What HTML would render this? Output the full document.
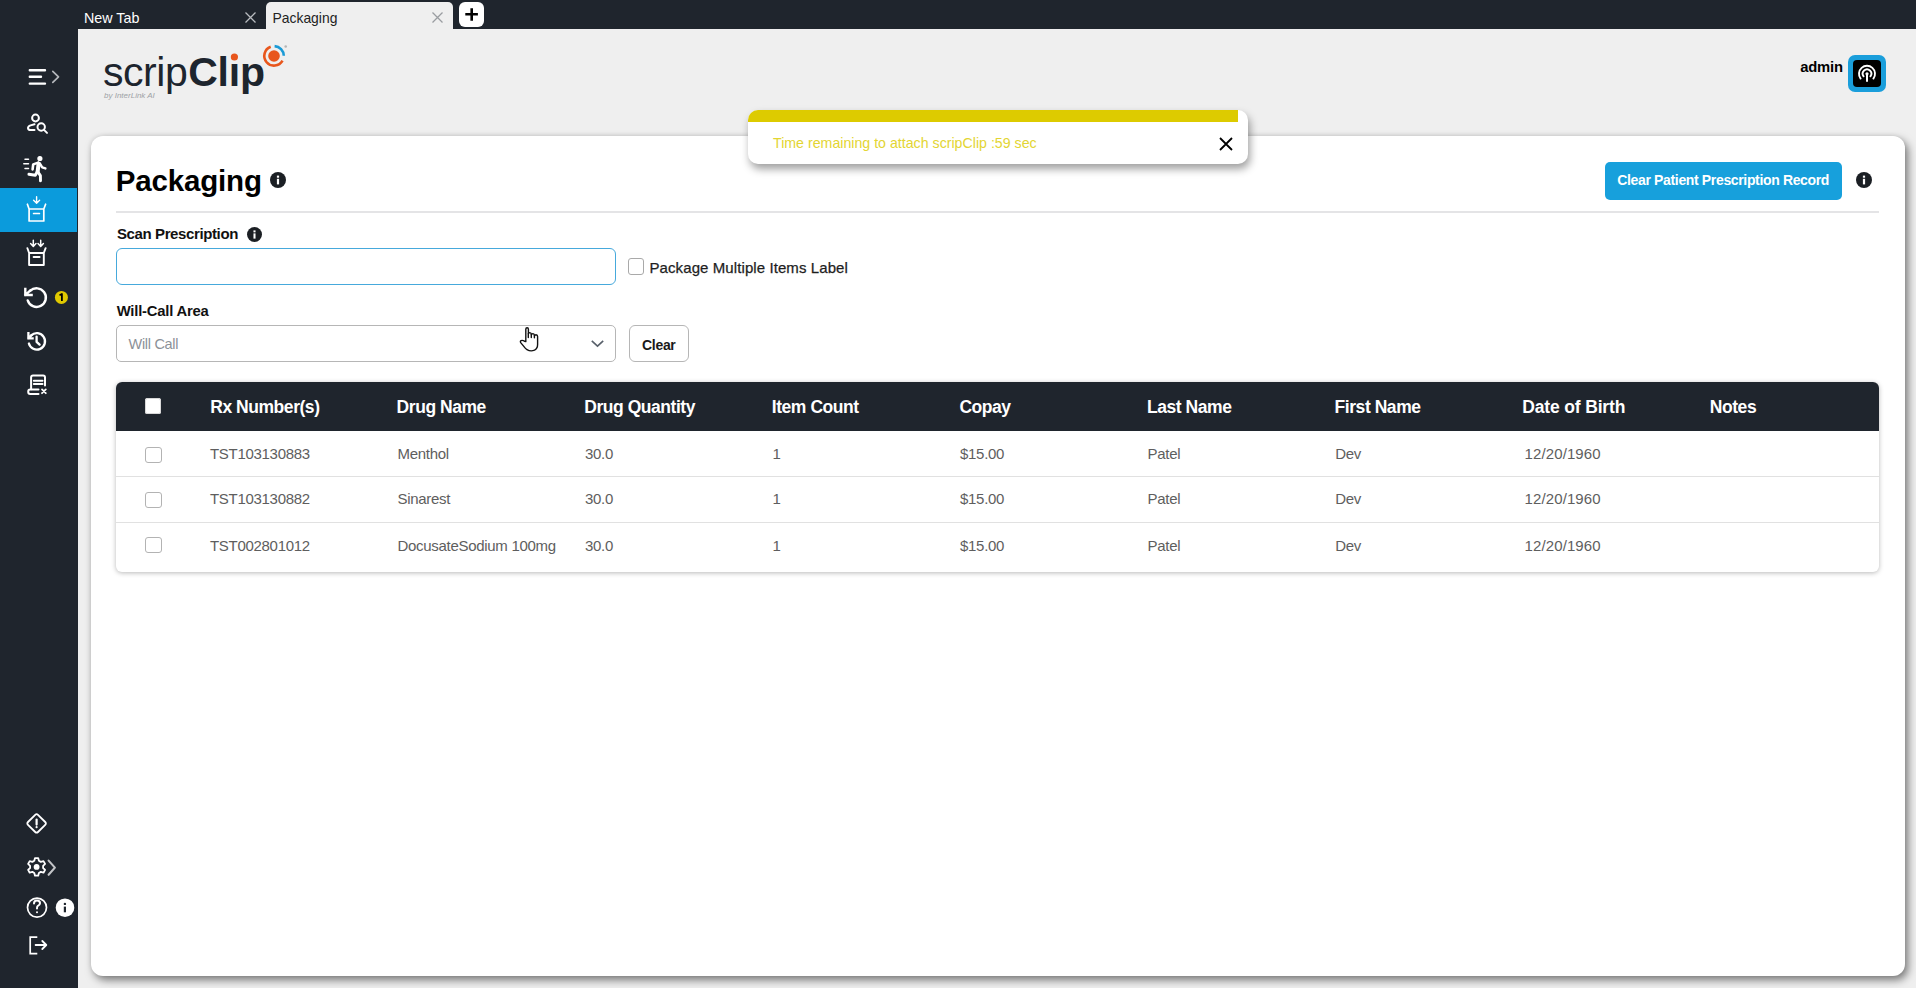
<!DOCTYPE html>
<html><head><meta charset="utf-8">
<style>
*{box-sizing:border-box;margin:0;padding:0}
html,body{width:1916px;height:988px;overflow:hidden;background:#efefef;font-family:"Liberation Sans",sans-serif;color:#000}
.abs{position:absolute}
#tabbar{left:0;top:0;width:1916px;height:29px;background:#1f252d}
#side{left:0;top:29px;width:78px;height:959px;background:#1f252d}
.t{position:absolute;white-space:nowrap;line-height:1}
#card{left:91px;top:136px;width:1814px;height:840px;background:#fff;border-radius:12px;box-shadow:3px 4px 8px rgba(0,0,0,.5),-1px -1px 4px rgba(0,0,0,.06)}
#hdr .h{top:398.5px;font-size:17.5px;font-weight:bold;letter-spacing:-.45px;color:#fff}
.row{position:absolute;left:0;width:1916px;height:20px}
.row .c{top:0;font-size:15px;letter-spacing:-.3px;color:#5e5e5e}
.cb{left:145px;width:16.5px;height:16px;border:1.5px solid #b3b3b3;border-radius:3px;background:#fff}
#toast{left:748px;top:110px;width:500px;height:54px;background:#fff;border-radius:10px;overflow:hidden;box-shadow:2px 5px 9px rgba(0,0,0,.38)}
</style></head>
<body>
<!-- TAB BAR -->
<div id="tabbar" class="abs">
  <div class="t" style="left:84px;top:11px;font-size:14.3px;color:#fff">New Tab</div>
  <svg class="abs" style="left:244px;top:11px" width="13" height="13" viewBox="0 0 13 13"><path d="M1.5 1.5L11.5 11.5M11.5 1.5L1.5 11.5" stroke="#b9bcc0" stroke-width="1.3"/></svg>
  <div class="abs" style="left:266px;top:2px;width:187px;height:27px;background:#efefef;border-radius:5px 5px 0 0"></div>
  <div class="t" style="left:272.5px;top:11.7px;font-size:13.9px;color:#222">Packaging</div>
  <svg class="abs" style="left:431px;top:11px" width="13" height="13" viewBox="0 0 13 13"><path d="M1.5 1.5L11.5 11.5M11.5 1.5L1.5 11.5" stroke="#9a9da1" stroke-width="1.3"/></svg>
  <div class="abs" style="left:459px;top:2px;width:25px;height:25px;background:#fff;border-radius:6px"></div>
  <svg class="abs" style="left:459px;top:2px" width="25" height="25" viewBox="0 0 25 25"><path d="M12.7 6.3V18.8M6.3 12.3H18.9" stroke="#000" stroke-width="2.6"/></svg>
</div>

<!-- SIDEBAR -->
<div id="side" class="abs"></div>
<div class="abs" style="left:0;top:188px;width:77px;height:44px;background:#0b9bdc"></div>
<svg class="abs" style="left:0;top:0" width="78" height="988" viewBox="0 0 78 988" fill="none" stroke="#fff" stroke-linecap="round" stroke-linejoin="round">
  <!-- hamburger -->
  <path d="M29.8 70.2H45M29.8 76.8H41M29.8 83.6H45" stroke-width="2.4"/>
  <path d="M52.8 71.3L58.5 76.8L52.8 82.3" stroke="#b4b7bb" stroke-width="1.7"/>
  <!-- user search -->
  <g stroke-width="2">
    <circle cx="35.5" cy="118" r="3.4"/>
    <path d="M34.5 124.3L30.6 125.4Q28 126.2 28 128Q28 130.1 30.6 130.1L34.5 130.1"/>
    <circle cx="41.2" cy="127" r="3.7"/>
    <path d="M44 129.9L47 132.9"/>
  </g>
  <!-- runner -->
  <g stroke-width="2">
    <circle cx="39.9" cy="158.5" r="1.9" fill="#fff" stroke-width="1.4"/>
    <path d="M25 159.3H28.5M23.8 163.7H28.5M25 168.5H28.5" stroke-width="1.5"/>
    <path d="M38.6 163.4L37.6 172" stroke-width="4"/>
    <path d="M38.2 162.6L33.2 164.4L32.6 169.4" stroke-width="2.6"/>
    <path d="M39.8 163.4L42.2 167.4L45.4 168.4" stroke-width="2.4"/>
    <path d="M37 172.2L35.3 175.3L28.9 174.3" stroke-width="2.9"/>
    <path d="M38 172.2L40.4 175.6L40.5 180.9" stroke-width="2.9"/>
  </g>
  <!-- box 1 (active) -->
  <g stroke-width="1.7">
    <path d="M36.6 196.8V203M33.6 200.3L36.6 203.2L39.6 200.3" stroke-width="1.4"/>
    <path d="M29.1 209V221H43.8V209ZM29.1 209L27.4 204.2M43.8 209L45.6 204.2M33.6 213.5H39.4"/>
  </g>
  <!-- box 2 -->
  <g stroke-width="1.9">
    <path d="M33.3 240.3V246.2M30.6 243.6L33.3 246.4L36 243.6M40.7 240.3V246.2M38 243.6L40.7 246.4L43.4 243.6" stroke-width="1.5"/>
    <path d="M29.1 253V265H43.8V253ZM29.1 253L27.4 248.2M43.8 253L45.6 248.2M33.6 257H39.6"/>
  </g>
  <!-- rotate -->
  <g stroke-width="2.4">
    <path d="M30.1 290.9A9.3 9.3 0 1 1 27.7 300.4"/>
    <path d="M25.3 288.9V295H31.6M25.5 294.8L30.3 290.4" stroke-linecap="square" stroke-linejoin="miter"/>
  </g>
  <circle cx="61.4" cy="297.4" r="6.5" fill="#e0c900" stroke="none"/>
  <path d="M59.5 295.3L61.9 294V300.9" stroke="#000" stroke-width="1.8" stroke-linecap="butt"/>
  <!-- history -->
  <g stroke-width="2.3">
    <path d="M31.2 335.4A8.2 8.2 0 1 1 28.9 343.5"/>
    <path d="M28.4 333.2V338.3H32.6M28.6 338.1L31.3 335.5" stroke-linecap="square" stroke-linejoin="miter"/>
    <path d="M36.6 336.6V341.8L39.6 344.6"/>
  </g>
  <!-- script x -->
  <g stroke-width="2">
    <path d="M31.1 389.3V377.3Q31.1 375.4 33 375.4H43.1Q45 375.4 45 377.3V385.4"/>
    <path d="M33.8 380.8H42.6M33.8 384H42.6" stroke-width="1.9"/>
    <path d="M38.5 389.5H30.2Q28.2 389.5 28.2 391.7Q28.2 394 30.2 394H38.5"/>
    <path d="M42 389.4L45.8 393.2M45.8 389.4L42 393.2" stroke-width="1.8"/>
  </g>
  <!-- warning diamond -->
  <g stroke-width="1.8">
    <path d="M35.2 814.8Q36.6 813.4 38 814.8L45.2 822Q46.6 823.4 45.2 824.8L38 832Q36.6 833.4 35.2 832L28 824.8Q26.6 823.4 28 822Z"/>
    <path d="M36.6 819.6V824.6" stroke-width="2.2"/>
    <circle cx="36.6" cy="827.2" r="1.1" fill="#fff" stroke="none"/>
  </g>
  <!-- gear -->
  <g stroke-width="1.8">
    <path d="M35 857.6H38.2L38.9 860.3L40.8 861.4L43.5 860.6L45.1 863.4L43.1 865.3V867.5L45.1 869.4L43.5 872.2L40.8 871.4L38.9 872.5L38.2 875.2H35L34.3 872.5L32.4 871.4L29.7 872.2L28.1 869.4L30.1 867.5V865.3L28.1 863.4L29.7 860.6L32.4 861.4L34.3 860.3Z" transform="translate(0 0.5)"/>
    <circle cx="36.6" cy="866.9" r="2.9" fill="#fff" stroke="none"/>
  </g>
  <path d="M48.6 860.6L54.9 867.6L48.6 874.8" stroke="#c3c5c8" stroke-width="2.1"/>
  <!-- help -->
  <circle cx="37" cy="907.6" r="9.5" stroke-width="1.7"/>
  <path d="M34 903.6Q34 900.5 37 900.5Q40 900.5 40 903.2Q40 905 37.6 906.2Q37 906.6 37 908.5" stroke-width="2"/>
  <circle cx="37" cy="912.2" r="1" fill="#fff" stroke="none"/>
  <circle cx="65" cy="907.7" r="9.3" fill="#fff" stroke="none"/>
  <path d="M64.9 906.6V912.3" stroke="#1f252d" stroke-width="2.2" stroke-linecap="butt"/>
  <circle cx="64.9" cy="903.9" r="1.2" fill="#1f252d" stroke="none"/>
  <!-- logout -->
  <path d="M37.3 937.1H30.2V953.7H37.3" stroke-width="1.7" stroke-linecap="butt" stroke-linejoin="miter"/>
  <path d="M35.6 945H46.2M42.3 941L46.3 945L42.3 949" stroke-width="1.8"/>
</svg>

<!-- HEADER -->
<div class="t" style="left:103px;top:51.5px;font-size:41px;letter-spacing:-.45px;color:#1d252e">scrip</div>
<div class="t" style="left:188.2px;top:51.5px;font-size:41px;letter-spacing:-.2px;color:#1d252e;font-weight:bold">Clıp</div>
<svg class="abs" style="left:220px;top:40px" width="72" height="30" viewBox="220 40 72 30" fill="none">
  <circle cx="234.4" cy="57" r="3.6" fill="#e8561c"/>
  <circle cx="274" cy="56" r="5.8" fill="#e8561c"/>
  <path d="M270.7 46.8A9.7 9.7 0 1 0 282.5 60.6" stroke="#e8561c" stroke-width="2.6"/>
  <path d="M274.6 46.1A9.9 9.9 0 0 1 283.8 55.7" stroke="#1a9ad6" stroke-width="2.6"/>
  <circle cx="285.7" cy="46.5" r="1.3" fill="#b5b5b5"/>
</svg>
<div class="t" style="left:104px;top:92px;font-size:8px;font-style:italic;color:#9ea2a6">by InterLink AI</div>

<div class="t" style="left:1800.2px;top:60px;font-size:14.8px;font-weight:bold;letter-spacing:-.2px;color:#000">admin</div>
<div class="abs" style="left:1848px;top:54.5px;width:38px;height:37px;background:#1a9edb;border-radius:7px"></div>
<div class="abs" style="left:1853px;top:60px;width:28px;height:27px;background:#000;border-radius:4px"></div>
<svg class="abs" style="left:1853px;top:60px" width="28" height="27" viewBox="1853 60 28 27" fill="none" stroke="#fff" stroke-linecap="round">
  <path d="M1860.6 78.6A8 8 0 1 1 1873.4 78.6" stroke-width="1.9"/>
  <path d="M1863.6 76.3A4.3 4.3 0 1 1 1870.4 76.3" stroke-width="1.9"/>
  <circle cx="1867" cy="73.8" r="1.6" fill="#fff" stroke="none"/>
  <path d="M1867 74V81.7" stroke-width="2" stroke-linecap="butt"/>
</svg>

<!-- CARD -->
<div id="card" class="abs"></div>
<div class="t" style="left:115.8px;top:166px;font-size:29.5px;font-weight:bold;letter-spacing:-.17px;color:#000">Packaging</div>
<svg class="abs" style="left:269.7px;top:172.3px" width="16" height="16" viewBox="0 0 16 16"><circle cx="8" cy="8" r="8" fill="#1b1f24"/><rect x="6.9" y="6.8" width="2.2" height="5.6" fill="#fff"/><rect x="6.9" y="3.6" width="2.2" height="2.1" fill="#fff"/></svg>
<div class="abs" style="left:116px;top:211px;width:1763px;height:2px;background:#e4e4e6"></div>
<div class="abs" style="left:1605px;top:162px;width:237px;height:37.5px;background:#17a0dc;border-radius:5px"></div>
<div class="t" style="left:1617.3px;top:172.5px;font-size:14px;font-weight:bold;letter-spacing:-.35px;color:#fff">Clear Patient Prescription Record</div>
<svg class="abs" style="left:1856px;top:172.3px" width="16" height="16" viewBox="0 0 16 16"><circle cx="8" cy="8" r="8" fill="#1b1f24"/><rect x="6.9" y="6.8" width="2.2" height="5.6" fill="#fff"/><rect x="6.9" y="3.6" width="2.2" height="2.1" fill="#fff"/></svg>

<div class="t" style="left:116.9px;top:226px;font-size:15px;font-weight:bold;letter-spacing:-.38px;color:#111">Scan Prescription</div>
<svg class="abs" style="left:246.7px;top:226.7px" width="15" height="15" viewBox="0 0 16 16"><circle cx="8" cy="8" r="8" fill="#1b1f24"/><rect x="6.9" y="6.8" width="2.2" height="5.6" fill="#fff"/><rect x="6.9" y="3.6" width="2.2" height="2.1" fill="#fff"/></svg>
<div class="abs" style="left:116px;top:248.3px;width:499.5px;height:37.2px;border:1.8px solid #46a9dc;border-radius:6px;background:#fff"></div>
<div class="abs" style="left:628px;top:258.3px;width:16.3px;height:16.3px;border:1.5px solid #a9a9a9;border-radius:3px;background:#fff"></div>
<div class="t" style="left:649.5px;top:259.5px;font-size:15px;letter-spacing:.09px;color:#1e1e1e;-webkit-text-stroke:.25px #1e1e1e">Package Multiple Items Label</div>

<div class="t" style="left:116.7px;top:303.5px;font-size:14.8px;font-weight:bold;letter-spacing:-.2px;color:#111">Will-Call Area</div>
<div class="abs" style="left:116px;top:325.3px;width:499.5px;height:37.2px;border:1.8px solid #b6b6b6;border-radius:5px;background:#fff"></div>
<div class="t" style="left:128.5px;top:337px;font-size:14.5px;letter-spacing:-.3px;color:#8c9198">Will Call</div>
<svg class="abs" style="left:590px;top:339px" width="15" height="10" viewBox="0 0 15 10" fill="none"><path d="M1.8 1.8L7.5 7.2L13.2 1.8" stroke="#58606a" stroke-width="1.6"/></svg>
<div class="abs" style="left:629px;top:325.3px;width:59.7px;height:36.9px;border:1.8px solid #b6b6b6;border-radius:6px;background:#fff"></div>
<div class="t" style="left:642px;top:337.5px;font-size:14px;font-weight:bold;letter-spacing:-.3px;color:#1a1a1a">Clear</div>
<!-- hand cursor -->
<svg class="abs" style="left:510px;top:320px" width="40" height="40" viewBox="510 320 40 40" fill="none" stroke="#111" stroke-width="1.4" stroke-linejoin="round" stroke-linecap="round"><path d="M525.8 341.5V329.3Q525.8 327.7 527.1 327.7Q528.4 327.7 528.4 329.3V333.8Q528.4 332.6 529.8 332.6Q531.3 332.7 531.3 334.2V334.8Q531.5 333.6 532.9 333.6Q534.4 333.7 534.4 335.2V335.8Q534.7 334.8 536 334.8Q537.6 334.9 537.6 336.6V344.5Q537.6 348.6 534.5 350.2Q530.6 351.8 527 349.6Q525.4 348.6 524 346.6L520.7 342.6Q519.9 341.2 521.1 340.6Q522.5 339.9 524.5 341.2Z" fill="#fff"/><path d="M528.3 333.8V337.6M531.3 334.8V337.6M534.4 335.8V337.8"/></svg>

<!-- TABLE -->
<div class="abs" style="left:116px;top:381.5px;width:1763px;height:190.5px;background:#fff;border-radius:6px;box-shadow:0 1px 5px rgba(0,0,0,.28)"></div>
<div class="abs" style="left:116px;top:381.5px;width:1763px;height:49.5px;background:#1f252d;border-radius:6px 6px 0 0"></div>
<div class="abs" style="left:144.8px;top:398.3px;width:15.8px;height:15.8px;background:#fff;border-radius:2.5px;box-shadow:inset 0 0 0 1px #d8d8d8"></div>
<div class="abs" style="left:116px;top:475.8px;width:1763px;height:1.6px;background:#e1e1e1"></div>
<div class="abs" style="left:116px;top:521.5px;width:1763px;height:1.6px;background:#e1e1e1"></div>
<div id="hdr">
<div class="t h" style="left:210.2px">Rx Number(s)</div>
<div class="t h" style="left:396.6px">Drug Name</div>
<div class="t h" style="left:584.2px">Drug Quantity</div>
<div class="t h" style="left:771.8px">Item Count</div>
<div class="t h" style="left:959.4px">Copay</div>
<div class="t h" style="left:1147px">Last Name</div>
<div class="t h" style="left:1334.6px">First Name</div>
<div class="t h" style="left:1522.2px;letter-spacing:-.15px">Date of Birth</div>
<div class="t h" style="left:1709.8px">Notes</div>
</div>
<div class="abs cb" style="top:446.7px"></div>
<div class="abs cb" style="top:491.6px"></div>
<div class="abs cb" style="top:537.4px"></div>
<div class="row" style="top:446.3px">
<div class="t c" style="left:210px">TST103130883</div>
<div class="t c" style="left:397.5px">Menthol</div>
<div class="t c" style="left:585px">30.0</div>
<div class="t c" style="left:772.6px">1</div>
<div class="t c" style="left:960px">$15.00</div>
<div class="t c" style="left:1147.6px">Patel</div>
<div class="t c" style="left:1335.2px">Dev</div>
<div class="t c" style="left:1524.6px;letter-spacing:.1px">12/20/1960</div>
</div>
<div class="row" style="top:491.3px">
<div class="t c" style="left:210px">TST103130882</div>
<div class="t c" style="left:397.5px">Sinarest</div>
<div class="t c" style="left:585px">30.0</div>
<div class="t c" style="left:772.6px">1</div>
<div class="t c" style="left:960px">$15.00</div>
<div class="t c" style="left:1147.6px">Patel</div>
<div class="t c" style="left:1335.2px">Dev</div>
<div class="t c" style="left:1524.6px;letter-spacing:.1px">12/20/1960</div>
</div>
<div class="row" style="top:537.5px">
<div class="t c" style="left:210px">TST002801012</div>
<div class="t c" style="left:397.5px">DocusateSodium 100mg</div>
<div class="t c" style="left:585px">30.0</div>
<div class="t c" style="left:772.6px">1</div>
<div class="t c" style="left:960px">$15.00</div>
<div class="t c" style="left:1147.6px">Patel</div>
<div class="t c" style="left:1335.2px">Dev</div>
<div class="t c" style="left:1524.6px;letter-spacing:.1px">12/20/1960</div>
</div>

<!-- TOAST -->
<div id="toast" class="abs">
  <div class="abs" style="left:0;top:0;width:490px;height:12px;background:#ddcb00"></div>
  <div class="t" style="left:25px;top:26px;font-size:14.2px;color:#e3d532">Time remaining to attach scripClip :59 sec</div>
  <svg class="abs" style="left:471px;top:27px" width="14" height="14" viewBox="0 0 14 14"><path d="M1 1L13 13M13 1L1 13" stroke="#000" stroke-width="1.8"/></svg>
</div>
</body></html>
